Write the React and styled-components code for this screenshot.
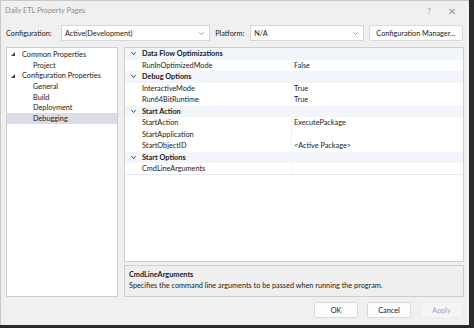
import React from 'react';
import styled, { createGlobalStyle } from 'styled-components';

const GlobalStyle = createGlobalStyle`
  html, body {
    margin: 0;
    padding: 0;
    background: #2a2a2a;
    overflow: hidden;
  }
  * { box-sizing: border-box; }
`;

const Window = styled.div`
  width: 469px;
  height: 325px;
  background: #f0f0f0;
  border-left: 1px solid #c9c9c9;
  border-top: 1px solid #c9c9c9;
  font-family: Lato, "Noto Sans", sans-serif;
  font-size: 7.3px;
  color: #1a1a1a;
  display: flex;
  flex-direction: column;
`;

const TitleBar = styled.div`
  height: 19px;
  display: flex;
  align-items: center;
  padding: 0 4px;
  color: #8c8c8c;
`;

const Title = styled.div`
  flex: 1;
`;

const TitleButton = styled.div`
  width: ${p => p.$w}px;
  text-align: center;
  color: #9a9a9a;
  font-size: ${p => p.$size}px;
`;

const ConfigRow = styled.div`
  margin-top: 5px;
  height: 16px;
  padding: 0 6px 0 5px;
  display: flex;
  align-items: center;
`;

const Label = styled.span`
  width: ${p => p.$w}px;
  flex-shrink: 0;
`;

const Select = styled.div`
  width: ${p => p.$w}px;
  height: 16px;
  background: #fff;
  border: 1px solid #d6d6d6;
  display: flex;
  align-items: center;
  padding: 0 4px 0 3px;
  margin-right: ${p => p.$gap}px;
`;

const SelectText = styled.span`
  flex: 1;
`;

const Button = styled.div`
  width: ${p => p.$w}px;
  height: 16px;
  background: ${p => (p.$disabled ? '#f5f5f5' : '#fdfdfd')};
  color: ${p => (p.$disabled ? '#a8a8a8' : '#1a1a1a')};
  border: 1px solid ${p => (p.$disabled ? '#ececec' : '#dadada')};
  border-radius: 2px;
  display: flex;
  align-items: center;
  justify-content: center;
`;

const Body = styled.div`
  margin-top: 6px;
  height: 250px;
  padding: 0 5px 0 5px;
  display: flex;
  gap: 6px;
`;

const Tree = styled.div`
  width: 112px;
  background: #fff;
  border: 1px solid #cfcfcf;
  padding-top: 1px;
`;

const TreeItem = styled.div`
  height: 10.7px;
  display: flex;
  align-items: center;
  padding-left: ${p => p.$indent}px;
  background: ${p => (p.$selected ? '#dcdce6' : 'transparent')};
`;

const Expander = styled.span`
  width: 0;
  height: 0;
  border-left: 4px solid transparent;
  border-bottom: 4px solid #444;
  margin-right: 7px;
`;

const RightCol = styled.div`
  flex: 1;
  display: flex;
  flex-direction: column;
  gap: 3px;
`;

const Grid = styled.div`
  height: 215px;
  background: #fff;
  border: 1px solid #cfcfcf;
`;

const Row = styled.div`
  height: 11.5px;
  display: flex;
  align-items: center;
  background: ${p => (p.$category ? '#f2f5fa' : '#fff')};
  border-bottom: ${p => (p.$last ? '1px solid #e6e9ef' : 'none')};
`;

const Gutter = styled.div`
  width: 16px;
  height: 100%;
  display: flex;
  align-items: center;
  justify-content: center;
`;

const Name = styled.div`
  width: 150px;
  padding-left: 1px;
  font-weight: ${p => (p.$bold ? 700 : 400)};
`;

const Value = styled.div`
  flex: 1;
  height: 100%;
  display: flex;
  align-items: center;
  padding-left: 2px;
  border-left: ${p => (p.$category ? 'none' : '1px solid #f0f2f5')};
`;

const Desc = styled.div`
  height: 32px;
  background: #efefef;
  border: 1px solid #cfcfcf;
  padding: 3px 4px;
  line-height: 11px;
`;

const DescTitle = styled.div`
  font-weight: 700;
`;

const Footer = styled.div`
  flex: 1;
  display: flex;
  align-items: center;
  justify-content: flex-end;
  gap: 9px;
  padding: 0 6px 2px 0;
`;

const Chevron = ({ size = 7 }) => (
  <svg width={size} height={size} viewBox="0 0 10 10">
    <path d="M2 3.5 L5 6.5 L8 3.5" fill="none" stroke="#8a8a8a" strokeWidth="1.2" />
  </svg>
);

const CatChevron = () => (
  <svg width="7" height="7" viewBox="0 0 10 10">
    <path d="M2 3 L5 6.5 L8 3" fill="none" stroke="#444" strokeWidth="1.4" />
  </svg>
);

const tree = [
  { label: 'Common Properties', indent: 4, expander: true },
  { label: 'Project', indent: 26 },
  { label: 'Configuration Properties', indent: 4, expander: true },
  { label: 'General', indent: 26 },
  { label: 'Build', indent: 26 },
  { label: 'Deployment', indent: 26 },
  { label: 'Debugging', indent: 26, selected: true },
];

const rows = [
  { cat: 'Data Flow Optimizations' },
  { name: 'RunInOptimizedMode', value: 'False' },
  { cat: 'Debug Options' },
  { name: 'InteractiveMode', value: 'True' },
  { name: 'Run64BitRuntime', value: 'True' },
  { cat: 'Start Action' },
  { name: 'StartAction', value: 'ExecutePackage' },
  { name: 'StartApplication', value: '' },
  { name: 'StartObjectID', value: '<Active Package>' },
  { cat: 'Start Options' },
  { name: 'CmdLineArguments', value: '', last: true },
];

export default function App() {
  return (
    <>
      <GlobalStyle />
      <Window>
        <TitleBar>
          <Title>Daily ETL Property Pages</Title>
          <TitleButton $w={20} $size={8}>?</TitleButton>
          <TitleButton $w={26} $size={10}>✕</TitleButton>
        </TitleBar>

        <ConfigRow>
          <Label $w={55}>Configuration:</Label>
          <Select $w={150} $gap={5}>
            <SelectText>Active(Development)</SelectText>
            <Chevron />
          </Select>
          <Label $w={35}>Platform:</Label>
          <Select $w={114} $gap={5}>
            <SelectText>N/A</SelectText>
            <Chevron />
          </Select>
          <Button $w={95}>Configuration Manager...</Button>
        </ConfigRow>

        <Body>
          <Tree>
            {tree.map(t => (
              <TreeItem key={t.label} $indent={t.indent} $selected={t.selected}>
                {t.expander && <Expander />}
                {t.label}
              </TreeItem>
            ))}
          </Tree>
          <RightCol>
            <Grid>
              {rows.map((r, i) =>
                r.cat ? (
                  <Row key={i} $category>
                    <Gutter><CatChevron /></Gutter>
                    <Name $bold>{r.cat}</Name>
                    <Value $category />
                  </Row>
                ) : (
                  <Row key={i} $last={r.last}>
                    <Gutter />
                    <Name>{r.name}</Name>
                    <Value>{r.value}</Value>
                  </Row>
                )
              )}
            </Grid>
            <Desc>
              <DescTitle>CmdLineArguments</DescTitle>
              <div>Specifies the command line arguments to be passed when running the program.</div>
            </Desc>
          </RightCol>
        </Body>

        <Footer>
          <Button $w={44}>OK</Button>
          <Button $w={44}>Cancel</Button>
          <Button $w={43} $disabled>Apply</Button>
        </Footer>
      </Window>
    </>
  );
}
